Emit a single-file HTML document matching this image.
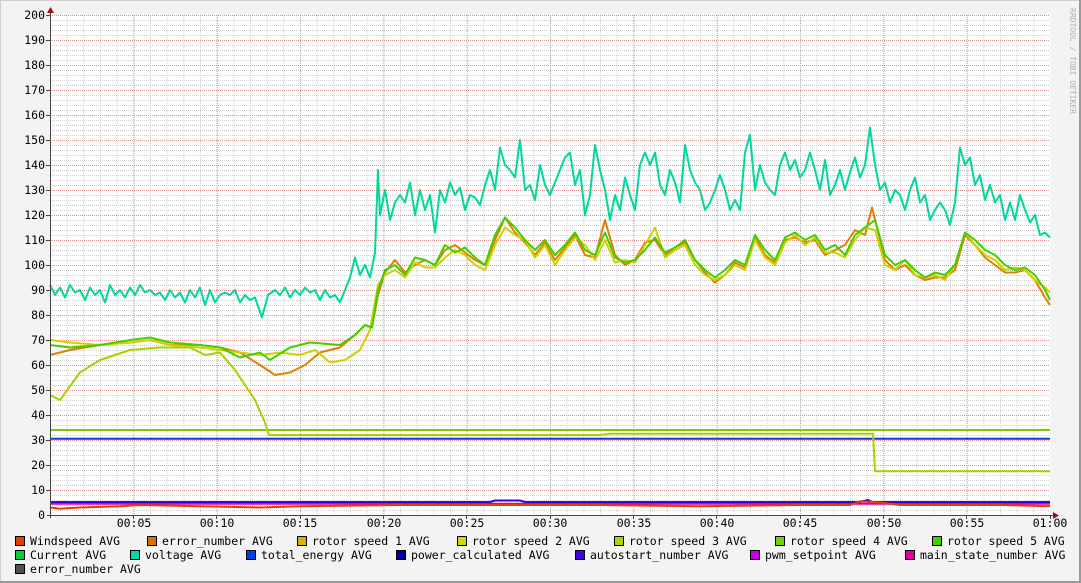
<!DOCTYPE html>
<html><head><meta charset="utf-8"><style>
html,body{margin:0;padding:0;background:#f3f3f3;}
svg{display:block;}
text{font-family:"DejaVu Sans Mono","Liberation Mono",monospace;font-size:11.5px;fill:#000;}
</style></head><body>
<svg width="1081" height="583" viewBox="0 0 1081 583" xmlns="http://www.w3.org/2000/svg">
<defs>
<pattern id="hmin" x="50" y="0" width="2" height="5" patternUnits="userSpaceOnUse"><rect x="0" y="0" width="1" height="1" fill="#cfcfcf"/></pattern>
<pattern id="vmin" x="50" y="15" width="16.6667" height="2" patternUnits="userSpaceOnUse"><rect x="0" y="0" width="1" height="1" fill="#cfcfcf"/></pattern>
<pattern id="hmaj" x="50" y="15" width="2" height="25" patternUnits="userSpaceOnUse"><rect x="0" y="0" width="1" height="1" fill="#e09090"/></pattern>
<pattern id="vmaj" x="50" y="15" width="83.333" height="2" patternUnits="userSpaceOnUse"><rect x="0" y="0" width="1" height="1" fill="#e09090"/></pattern>
</defs>
<rect x="0" y="0" width="1081" height="583" fill="#f3f3f3"/>
<rect x="0.5" y="0.5" width="1080" height="582" fill="none" stroke="#cfcfcf"/>
<line x1="1080" y1="0" x2="1080" y2="583" stroke="#9a9a9a" stroke-width="2"/>
<line x1="0" y1="582" x2="1081" y2="582" stroke="#9a9a9a" stroke-width="2"/>
<rect x="50" y="15" width="1000" height="500" fill="#fff"/>
<rect x="51" y="15" width="999" height="500" fill="url(#hmin)"/>
<rect x="51" y="15" width="999" height="500" fill="url(#vmin)"/>
<rect x="51" y="15" width="999" height="500" fill="url(#hmaj)"/>
<rect x="51" y="15" width="999" height="500" fill="url(#vmaj)"/>

<g fill="none" stroke-width="2" stroke-linejoin="round" transform="translate(0,515) scale(1,-2.5)">
<polyline vector-effect="non-scaling-stroke" stroke="#80c800" points="50,34 1050,34"/>
<polyline vector-effect="non-scaling-stroke" stroke="#0040e0" points="50,30.5 1050,30.5"/>
<polyline vector-effect="non-scaling-stroke" stroke="#e000a0" points="50,4.5 1050,4.5"/>
<polyline vector-effect="non-scaling-stroke" stroke="#4000e0" points="50,5.2 490,5.2 495,5.8 520,5.8 525,5.2 860,5.2 868,6 872,5.2 1050,5.2"/>
<polyline vector-effect="non-scaling-stroke" stroke="#e04000" points="50,3 60,2.5 80,3 120,3.5 140,4 200,3.5 260,3 300,3.5 400,4 500,4 600,4 700,3.5 800,4 850,4 860,5.5 880,5 900,4 1000,4 1050,3.5"/>
<polyline vector-effect="non-scaling-stroke" stroke="#a8d000" points="50,48 60,46 80,57 100,62 130,66 160,67 190,67 205,64 220,65 235,58 255,46 265,37 269,32 600,32 610,32.5 873,32.5 875,17.5 1050,17.5"/>
<polyline vector-effect="non-scaling-stroke" stroke="#e08000" points="50,64 70,66 100,68 130,69 150,70 170,68 200,68 220,67 240,65 260,60 275,56 290,57 305,60 320,65 340,67 355,72 365,76 372,75 378,88 385,97 395,102 405,97 415,100 425,102 435,100 445,106 455,108 465,105 475,102 485,100 495,110 505,119 515,113 525,109 535,104 545,109 555,102 565,107 575,112 585,104 595,103 605,118 615,104 625,100 635,102 645,109 655,110 665,104 675,107 685,109 695,102 705,97 715,93 725,96 735,101 745,99 755,111 765,104 775,101 785,110 795,111 805,109 815,110 825,104 835,106 845,108 855,114 865,112 872,123 885,102 895,98 905,100 915,96 925,94 935,95 945,95 955,98 965,112 975,108 985,103 995,100 1005,97 1015,97 1025,98 1035,94 1045,87 1050,84"/>
<polyline vector-effect="non-scaling-stroke" stroke="#d0d000" points="50,70 70,69 100,68 130,69 150,70 170,68 200,67 220,66 240,65 260,64 280,65 300,64 315,66 330,61 345,62 360,66 370,74 378,92 385,96 395,98 405,95 415,101 425,99 435,99 445,103 455,106 465,104 475,100 485,98 495,108 505,115 515,112 525,110 535,103 545,108 555,100 565,106 575,111 585,108 595,102 605,110 615,101 625,102 635,101 645,108 655,115 665,103 675,106 685,108 695,100 705,96 715,94 725,96 735,100 745,98 755,110 765,103 775,100 785,109 795,112 805,108 815,111 825,105 835,105 845,103 855,110 865,115 875,114 885,100 895,98 905,102 915,96 925,95 935,96 945,94 955,100 965,113 975,108 985,104 995,102 1005,98 1015,99 1025,98 1035,94 1045,91 1050,89"/>
<polyline vector-effect="non-scaling-stroke" stroke="#40d000" points="50,68 70,67 100,68 130,70 150,71 170,69 200,68 220,67 240,63 260,65 270,62 290,67 310,69 340,68 355,72 365,76 372,75 378,90 385,98 395,100 405,96 415,103 425,102 435,100 445,108 455,105 465,107 475,103 485,100 495,112 505,119 515,115 525,110 535,106 545,110 555,104 565,108 575,113 585,106 595,104 605,113 615,103 625,101 635,102 645,106 655,111 665,105 675,107 685,110 695,102 705,98 715,95 725,98 735,102 745,100 755,112 765,106 775,102 785,111 795,113 805,110 815,112 825,106 835,108 845,104 855,112 865,115 875,118 885,104 895,100 905,102 915,98 925,95 935,97 945,96 955,100 965,113 975,110 985,106 995,104 1005,100 1015,98 1025,99 1035,96 1045,90 1050,86"/>
<polyline vector-effect="non-scaling-stroke" stroke="#00d8a0" points="50,92 55,88 60,91 65,87 70,92 75,89 80,90 85,86 90,91 95,88 100,90 105,85 110,92 115,88 120,90 125,87 130,91 135,88 140,92 145,89 150,90 155,88 160,89 165,86 170,90 175,87 180,89 185,85 190,90 195,87 200,91 205,84 210,90 215,85 220,88 225,89 230,88 235,90 240,85 245,88 250,86 255,87 262,79 268,88 275,90 280,88 285,91 290,87 295,90 300,88 305,91 310,89 315,90 320,86 325,90 330,87 335,88 340,85 345,90 350,95 355,103 360,96 365,100 370,95 375,105 378,138 380,120 385,130 390,118 395,125 400,128 405,125 410,133 415,120 420,130 425,122 430,128 435,113 440,130 445,125 450,133 455,128 460,131 465,122 470,128 475,127 480,124 485,132 490,138 495,130 500,147 505,140 510,138 515,135 520,150 525,130 530,132 535,126 540,140 545,132 550,128 555,133 560,138 565,143 570,145 575,132 580,138 585,120 590,128 595,148 600,138 605,130 610,118 615,128 620,122 625,135 630,128 635,122 640,140 645,145 650,140 655,145 660,132 665,128 670,138 675,133 680,125 685,148 690,138 695,133 700,130 705,122 710,125 715,130 720,136 725,130 730,122 735,126 740,122 745,145 750,152 755,130 760,140 765,133 770,130 775,128 780,140 785,145 790,138 795,142 800,135 805,138 810,145 815,138 820,130 825,142 830,128 835,132 840,138 845,130 850,137 855,143 860,135 865,140 870,155 875,140 880,130 885,133 890,125 895,130 900,128 905,122 910,130 915,135 920,125 925,128 930,118 935,122 940,125 945,122 950,116 955,125 960,147 965,140 970,143 975,132 980,136 985,126 990,132 995,125 1000,128 1005,118 1010,125 1015,118 1020,128 1025,122 1030,117 1035,120 1040,112 1045,113 1050,111"/>
</g>

<!-- axes -->
<line x1="50.5" y1="12" x2="50.5" y2="518" stroke="#444"/>
<line x1="47" y1="515.5" x2="1054" y2="515.5" stroke="#444"/>
<polygon points="47,13 54,13 50.5,7" fill="#a01010"/>
<polygon points="1053,512 1053,519 1059,515.5" fill="#a01010"/>
<g stroke="#444">
<line x1="46" y1="15.5" x2="50" y2="15.5"/><line x1="46" y1="40.5" x2="50" y2="40.5"/><line x1="46" y1="65.5" x2="50" y2="65.5"/><line x1="46" y1="90.5" x2="50" y2="90.5"/><line x1="46" y1="115.5" x2="50" y2="115.5"/><line x1="46" y1="140.5" x2="50" y2="140.5"/><line x1="46" y1="165.5" x2="50" y2="165.5"/><line x1="46" y1="190.5" x2="50" y2="190.5"/><line x1="46" y1="215.5" x2="50" y2="215.5"/><line x1="46" y1="240.5" x2="50" y2="240.5"/><line x1="46" y1="265.5" x2="50" y2="265.5"/><line x1="46" y1="290.5" x2="50" y2="290.5"/><line x1="46" y1="315.5" x2="50" y2="315.5"/><line x1="46" y1="340.5" x2="50" y2="340.5"/><line x1="46" y1="365.5" x2="50" y2="365.5"/><line x1="46" y1="390.5" x2="50" y2="390.5"/><line x1="46" y1="415.5" x2="50" y2="415.5"/><line x1="46" y1="440.5" x2="50" y2="440.5"/><line x1="46" y1="465.5" x2="50" y2="465.5"/><line x1="46" y1="490.5" x2="50" y2="490.5"/>
<line x1="133.5" y1="515" x2="133.5" y2="519"/><line x1="216.5" y1="515" x2="216.5" y2="519"/><line x1="300.5" y1="515" x2="300.5" y2="519"/><line x1="383.5" y1="515" x2="383.5" y2="519"/><line x1="466.5" y1="515" x2="466.5" y2="519"/><line x1="550.5" y1="515" x2="550.5" y2="519"/><line x1="633.5" y1="515" x2="633.5" y2="519"/><line x1="716.5" y1="515" x2="716.5" y2="519"/><line x1="800.5" y1="515" x2="800.5" y2="519"/><line x1="883.5" y1="515" x2="883.5" y2="519"/><line x1="966.5" y1="515" x2="966.5" y2="519"/><line x1="1050.5" y1="515" x2="1050.5" y2="519"/>
</g>
<g text-anchor="end">
<text x="45" y="19">200</text><text x="45" y="44">190</text><text x="45" y="69">180</text><text x="45" y="94">170</text><text x="45" y="119">160</text><text x="45" y="144">150</text><text x="45" y="169">140</text><text x="45" y="194">130</text><text x="45" y="219">120</text><text x="45" y="244">110</text><text x="45" y="269">100</text><text x="45" y="294">90</text><text x="45" y="319">80</text><text x="45" y="344">70</text><text x="45" y="369">60</text><text x="45" y="394">50</text><text x="45" y="419">40</text><text x="45" y="444">30</text><text x="45" y="469">20</text><text x="45" y="494">10</text><text x="45" y="519">0</text>
</g>
<g text-anchor="middle">
<text x="134" y="527">00:05</text><text x="217" y="527">00:10</text><text x="300" y="527">00:15</text><text x="384" y="527">00:20</text><text x="467" y="527">00:25</text><text x="550" y="527">00:30</text><text x="634" y="527">00:35</text><text x="717" y="527">00:40</text><text x="800" y="527">00:45</text><text x="884" y="527">00:50</text><text x="967" y="527">00:55</text><text x="1050" y="527">01:00</text>
</g>
<text x="1070" y="8" transform="rotate(90 1070 8)" style="font-size:8px;fill:#b0b0b0">RRDTOOL / TOBI OETIKER</text>

<g stroke="#000" stroke-width="1">
<rect x="15.5" y="536.5" width="9" height="9" fill="#e04000"/>
<rect x="147.5" y="536.5" width="9" height="9" fill="#e07000"/>
<rect x="297.5" y="536.5" width="9" height="9" fill="#e0b000"/>
<rect x="457.5" y="536.5" width="9" height="9" fill="#d8d800"/>
<rect x="614.5" y="536.5" width="9" height="9" fill="#a8d800"/>
<rect x="775.5" y="536.5" width="9" height="9" fill="#70d000"/>
<rect x="932.5" y="536.5" width="9" height="9" fill="#40d000"/>
<rect x="15.5" y="550.5" width="9" height="9" fill="#00d040"/>
<rect x="130.5" y="550.5" width="9" height="9" fill="#00d8a0"/>
<rect x="246.5" y="550.5" width="9" height="9" fill="#0040e0"/>
<rect x="396.5" y="550.5" width="9" height="9" fill="#0000a0"/>
<rect x="575.5" y="550.5" width="9" height="9" fill="#4000e0"/>
<rect x="750.5" y="550.5" width="9" height="9" fill="#c000e0"/>
<rect x="905.5" y="550.5" width="9" height="9" fill="#e000a0"/>
<rect x="15.5" y="564.5" width="9" height="9" fill="#505050"/>
</g>
<g>
<text x="30" y="545">Windspeed AVG</text>
<text x="162" y="545">error_number AVG</text>
<text x="312" y="545">rotor speed 1 AVG</text>
<text x="472" y="545">rotor speed 2 AVG</text>
<text x="629" y="545">rotor speed 3 AVG</text>
<text x="790" y="545">rotor speed 4 AVG</text>
<text x="947" y="545">rotor speed 5 AVG</text>
<text x="30" y="559">Current AVG</text>
<text x="145" y="559">voltage AVG</text>
<text x="261" y="559">total_energy AVG</text>
<text x="411" y="559">power_calculated AVG</text>
<text x="590" y="559">autostart_number AVG</text>
<text x="765" y="559">pwm_setpoint AVG</text>
<text x="920" y="559">main_state_number AVG</text>
<text x="30" y="573">error_number AVG</text>
</g>
</svg>
</body></html>
